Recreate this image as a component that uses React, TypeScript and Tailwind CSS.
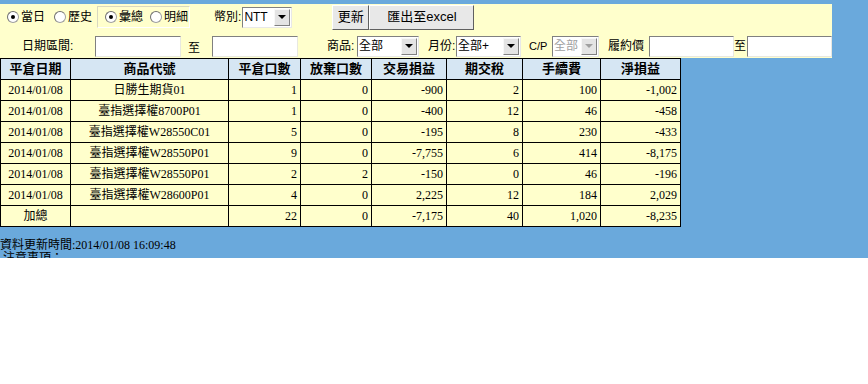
import React from 'react'

const cjk = '"Liberation Serif", "Noto Sans CJK TC", serif'
const ui = '"Liberation Sans", "Noto Sans CJK TC", sans-serif'

const rows = [
  { date: '2014/01/08', code: '日勝生期貨01', close: '1', drop: '0', pl: '-900', tax: '2', fee: '100', net: '-1,002' },
  { date: '2014/01/08', code: '臺指選擇權8700P01', close: '1', drop: '0', pl: '-400', tax: '12', fee: '46', net: '-458' },
  { date: '2014/01/08', code: '臺指選擇權W28550C01', close: '5', drop: '0', pl: '-195', tax: '8', fee: '230', net: '-433' },
  { date: '2014/01/08', code: '臺指選擇權W28550P01', close: '9', drop: '0', pl: '-7,755', tax: '6', fee: '414', net: '-8,175' },
  { date: '2014/01/08', code: '臺指選擇權W28550P01', close: '2', drop: '2', pl: '-150', tax: '0', fee: '46', net: '-196' },
  { date: '2014/01/08', code: '臺指選擇權W28600P01', close: '4', drop: '0', pl: '2,225', tax: '12', fee: '184', net: '2,029' },
  { date: '加總', code: '', close: '22', drop: '0', pl: '-7,175', tax: '40', fee: '1,020', net: '-8,235' },
]

const headers = ['平倉日期', '商品代號', '平倉口數', '放棄口數', '交易損益', '期交稅', '手續費', '淨損益']
const widths = ['w-[70px]', 'w-[158px]', 'w-[72px]', 'w-[71px]', 'w-[75px]', 'w-[76px]', 'w-[78px]', 'w-[80px]']

function Radio({ checked, label }: { checked?: boolean; label: string }) {
  return (
    <span className="flex items-center shrink-0">
      <span className="w-[12px] h-[12px] rounded-full bg-white border border-[#a0a0a0] border-t-[#707070] border-l-[#707070] flex items-center justify-center">
        {checked && <span className="w-[4px] h-[4px] rounded-full bg-black" />}
      </span>
      <span className="ml-[2px] text-[12px] text-black">{label}</span>
    </span>
  )
}

function Select({ value, w, disabled }: { value: string; w: string; disabled?: boolean }) {
  return (
    <span className={`${w} shrink-0 h-[21px] flex bg-white border border-[#808080] border-b-[#e8e8e8] border-r-[#e8e8e8]`}>
      <span className={`flex-1 pl-[1px] leading-[19px] text-[12px] whitespace-nowrap overflow-hidden ${disabled ? 'text-[#a0a0a0]' : 'text-black'}`}>{value}</span>
      <span className="w-[16px] h-[17px] mt-[1px] mr-[1px] bg-[#e4e4e4] border border-[#f8f8f8] border-b-[#808080] border-r-[#808080] flex items-center justify-center">
        <span className={`w-0 h-0 border-l-[4px] border-r-[4px] border-t-[4px] border-l-transparent border-r-transparent ${disabled ? 'border-t-[#a0a0a0]' : 'border-t-black'}`} />
      </span>
    </span>
  )
}

function Input({ w }: { w: string }) {
  return <span className={`${w} shrink-0 h-[21px] bg-white border border-[#808080] border-b-[#e8e8e0] border-r-[#e8e8e0]`} />
}

function Button({ label, w }: { label: string; w: string }) {
  return (
    <span className={`${w} shrink-0 h-[25px] flex items-center justify-center bg-[#e8e8e8] border border-white border-b-[#606060] border-r-[#606060] text-[13px] text-black`}>
      {label}
    </span>
  )
}

function Label({ text, w, cls = '' }: { text: string; w: string; cls?: string }) {
  return <span className={`${w} shrink-0 whitespace-nowrap ${cls}`}>{text}</span>
}

export default function App() {
  return (
    <div className="w-[868px] h-[384px] bg-white">
      <div className="h-[258px] overflow-hidden bg-[#6aa9dc] pt-[4px]" style={{ fontFamily: ui }}>
        <div className="w-[832px] h-[54px] bg-[#ffffcc]">
          <div className="flex items-center h-[26px] pl-[7px]">
            <Radio checked label="當日" />
            <span className="ml-[9px]"><Radio label="歷史" /></span>
            <span className="ml-[5px] w-[93px] shrink-0 h-[22px] flex items-center pl-[7px] border border-[#d8d8c0] border-b-white border-r-white">
              <Radio checked label="彙總" />
              <span className="ml-[7px]"><Radio label="明細" /></span>
            </span>
            <span className="ml-[24px] text-[12px] shrink-0">幣別:</span>
            <span className="ml-[1px]"><Select value="NTT" w="w-[50px]" /></span>
            <span className="ml-[40px]"><Button label="更新" w="w-[37px]" /></span>
            <Button label="匯出至excel" w="w-[105px]" />
          </div>
          <div className="flex items-center h-[22px] mt-[5px] text-[12px] w-[832px]">
            <Label text="日期區間:" w="w-[73px]" cls="ml-[22px]" />
            <Input w="w-[86px]" />
            <Label text="至" w="w-[31px]" cls="pl-[7px] mt-[4px]" />
            <Input w="w-[86px]" />
            <Label text="商品:" w="w-[30px]" cls="ml-[29px]" />
            <Select value="全部" w="w-[62px]" />
            <Label text="月份:" w="w-[28px]" cls="ml-[9px]" />
            <Select value="全部+" w="w-[65px]" />
            <Label text="C/P" w="w-[23px]" cls="ml-[8px] text-[11px]" />
            <Select value="全部" w="w-[47px]" disabled />
            <Label text="履約價" w="w-[41px]" cls="ml-[9px]" />
            <Input w="w-[85px]" />
            <Label text="至" w="w-[13px]" />
            <Input w="w-[85px]" />
          </div>
        </div>
        <table className="w-[680px] border-collapse table-fixed" style={{ fontFamily: cjk }}>
          <thead>
            <tr className="h-[21px]">
              {headers.map((h, i) => (
                <th key={h} className={`${widths[i]} border border-black bg-[#d6e6f3] text-[13px] font-bold text-center p-0`}>
                  {h}
                </th>
              ))}
            </tr>
          </thead>
          <tbody>
            {rows.map((r, i) => (
              <tr key={i} className="h-[21px] bg-[#ffffcc] text-[12px]">
                <td className="border border-black text-center p-0">{r.date}</td>
                <td className="border border-black text-center p-0">{r.code}</td>
                {[r.close, r.drop, r.pl, r.tax, r.fee, r.net].map((v, j) => (
                  <td key={j} className="border border-black text-right pr-[3px] p-0">{v}</td>
                ))}
              </tr>
            ))}
          </tbody>
        </table>
        <div className="mt-[12px] text-[12px] leading-[13px]" style={{ fontFamily: cjk }}>
          資料更新時間:2014/01/08 16:09:48
        </div>
        <div className="pl-[3px] text-[12px] leading-[13px]" style={{ fontFamily: cjk }}>注意事項：</div>
      </div>
    </div>
  )
}
